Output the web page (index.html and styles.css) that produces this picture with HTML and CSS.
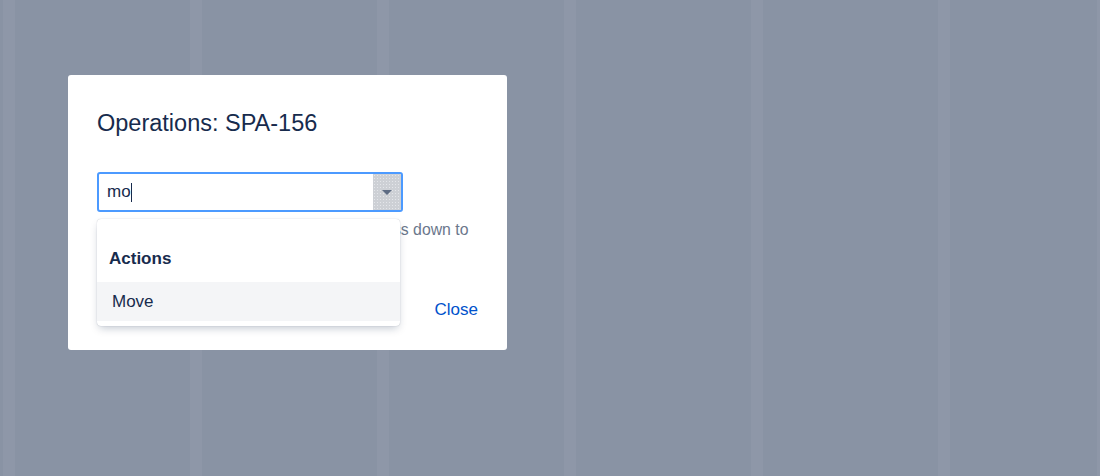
FILE: index.html
```html
<!DOCTYPE html>
<html lang="en">

<head>
  <meta charset="UTF-8">
  <meta name="viewport" content="width=device-width, initial-scale=1.0">
  <title>Operations</title>

  <link rel="stylesheet" href="styles.css">
</head>

<body>

  <div class="board">
    <div class="column"></div>
    <div class="column"></div>
    <div class="column"></div>
    <div class="column"></div>
    <div class="column"></div>
    <div class="column"></div>
    <div class="column"></div>
  </div>

  <div class="modal">
    <h1 class="modal-title">Operations: SPA-156</h1>

    <div class="picker">
      <div class="picker-input">
        <span class="picker-value">mo</span><span class="caret"></span>
        <span class="picker-arrow"><span class="triangle"></span></span>
      </div>

      <p class="picker-help">Start typing to search for operations or press down to</p>

      <div class="menu">
        <div class="menu-heading">Actions</div>
        <div class="menu-item active">Move</div>
      </div>
    </div>

    <div class="modal-footer">
      <a href="#" class="link">Close</a>
    </div>
  </div>

</body>

</html>
```

FILE: styles.css
```css
body {
  margin: 0;
  height: 476px;
  overflow: hidden;
  font-family: "Liberation Sans", Arial, sans-serif;
  color: #172b4d;
  background-color: #8e97a8;
}

.board {
  display: grid;
  grid-template-columns: 3px repeat(5, 175px) 147px;
  gap: 12px;
  height: 476px;
}

.column {
  background-color: #8993a4;
}

.modal {
  position: absolute;
  left: 68px;
  top: 75px;
  width: 381px;
  padding: 34px 29px 30px;
  background: #ffffff;
  border-radius: 3px;
}

.modal-title {
  margin: 0;
  font-size: 23.5px;
  font-weight: normal;
  line-height: 28px;
}

.picker {
  position: relative;
  margin-top: 35px;
}

.picker-input {
  display: flex;
  align-items: center;
  width: 302px;
  height: 36px;
  border: 2px solid #4c9aff;
  border-radius: 3px;
}

.picker-value {
  padding-left: 8px;
  font-size: 17px;
}

.caret {
  width: 1px;
  height: 19px;
  background: #172b4d;
}

.picker-arrow {
  display: flex;
  align-items: center;
  justify-content: center;
  margin-left: auto;
  width: 28px;
  height: 36px;
  background-color: #cdd0d5;
  background-image: radial-gradient(#e4e6ea 0.6px, transparent 0.8px);
  background-size: 3px 3px;
}

.triangle {
  width: 0;
  height: 0;
  border-left: 5px solid transparent;
  border-right: 5px solid transparent;
  border-top: 5px solid #5e6c84;
}

.picker-help {
  margin: 8px 0 0;
  height: 39px;
  font-size: 15.8px;
  line-height: 20px;
  color: #6b778c;
  white-space: nowrap;
}

.menu {
  position: absolute;
  top: 47px;
  left: 0;
  width: 303px;
  padding-bottom: 5px;
  background: #ffffff;
  border-radius: 4px;
  box-shadow: 0 4px 8px -2px rgba(9, 30, 66, 0.25), 0 0 1px rgba(9, 30, 66, 0.31);
}

.menu-heading {
  padding: 30px 12px 13px;
  font-size: 17px;
  font-weight: bold;
  line-height: 20px;
}

.menu-item {
  padding: 0 15px;
  font-size: 17px;
  line-height: 39px;
}

.menu-item.active {
  background-color: #f4f5f7;
}

.modal-footer {
  display: flex;
  justify-content: flex-end;
  margin-top: 41px;
}

.link {
  font-size: 17px;
  line-height: 20px;
  color: #0052cc;
  text-decoration: none;
}
```
